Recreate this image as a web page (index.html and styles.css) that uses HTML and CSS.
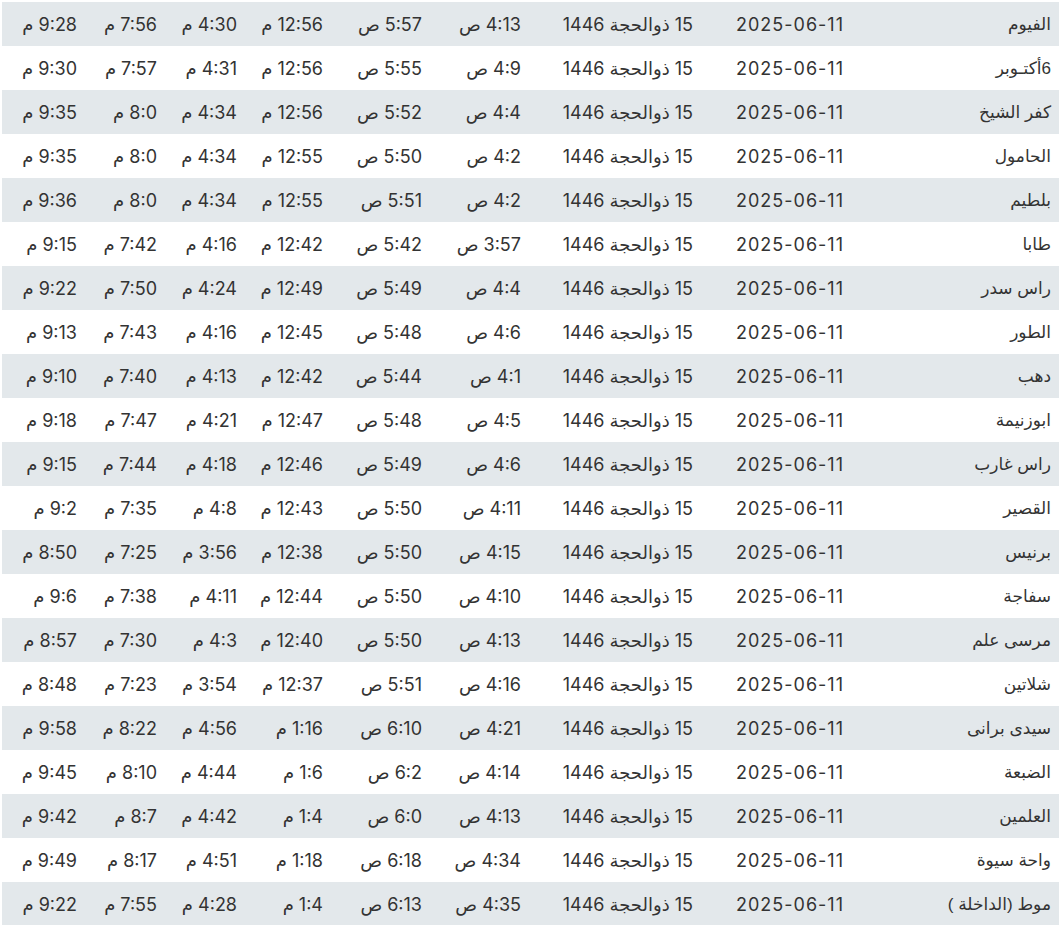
FILE: index.html
```html
<!DOCTYPE html>
<html lang="ar" dir="rtl">
  <head>
    <meta charset="UTF-8" />
    <title>مواقيت الصلاة</title>
    <link rel="stylesheet" href="styles.css">
  </head>
  <body>
    <div class="times-wrap">
      <table class="times-table">
        <colgroup>
          <col class="col-city" />
          <col class="col-date" />
          <col class="col-hijri" />
          <col class="col-fajr" />
          <col class="col-sunrise" />
          <col class="col-dhuhr" />
          <col class="col-asr" />
          <col class="col-maghrib" />
          <col class="col-isha" />
        </colgroup>
        <tbody id="times-body"></tbody>
      </table>
    </div>

    <script>
      // city, fajr, sunrise, dhuhr, asr, maghrib, isha
      const rows = [
        ["الفيوم", "4:13 ص", "5:57 ص", "12:56 م", "4:30 م", "7:56 م", "9:28 م"],
        ["6أكتـوبر", "4:9 ص", "5:55 ص", "12:56 م", "4:31 م", "7:57 م", "9:30 م"],
        ["كفر الشيخ", "4:4 ص", "5:52 ص", "12:56 م", "4:34 م", "8:0 م", "9:35 م"],
        ["الحامول", "4:2 ص", "5:50 ص", "12:55 م", "4:34 م", "8:0 م", "9:35 م"],
        ["بلطيم", "4:2 ص", "5:51 ص", "12:55 م", "4:34 م", "8:0 م", "9:36 م"],
        ["طابا", "3:57 ص", "5:42 ص", "12:42 م", "4:16 م", "7:42 م", "9:15 م"],
        ["راس سدر", "4:4 ص", "5:49 ص", "12:49 م", "4:24 م", "7:50 م", "9:22 م"],
        ["الطور", "4:6 ص", "5:48 ص", "12:45 م", "4:16 م", "7:43 م", "9:13 م"],
        ["دهب", "4:1 ص", "5:44 ص", "12:42 م", "4:13 م", "7:40 م", "9:10 م"],
        ["ابوزنيمة", "4:5 ص", "5:48 ص", "12:47 م", "4:21 م", "7:47 م", "9:18 م"],
        ["راس غارب", "4:6 ص", "5:49 ص", "12:46 م", "4:18 م", "7:44 م", "9:15 م"],
        ["القصير", "4:11 ص", "5:50 ص", "12:43 م", "4:8 م", "7:35 م", "9:2 م"],
        ["برنيس", "4:15 ص", "5:50 ص", "12:38 م", "3:56 م", "7:25 م", "8:50 م"],
        ["سفاجة", "4:10 ص", "5:50 ص", "12:44 م", "4:11 م", "7:38 م", "9:6 م"],
        ["مرسى علم", "4:13 ص", "5:50 ص", "12:40 م", "4:3 م", "7:30 م", "8:57 م"],
        ["شلاتين", "4:16 ص", "5:51 ص", "12:37 م", "3:54 م", "7:23 م", "8:48 م"],
        ["سيدى برانى", "4:21 ص", "6:10 ص", "1:16 م", "4:56 م", "8:22 م", "9:58 م"],
        ["الضبعة", "4:14 ص", "6:2 ص", "1:6 م", "4:44 م", "8:10 م", "9:45 م"],
        ["العلمين", "4:13 ص", "6:0 ص", "1:4 م", "4:42 م", "8:7 م", "9:42 م"],
        ["واحة سيوة", "4:34 ص", "6:18 ص", "1:18 م", "4:51 م", "8:17 م", "9:49 م"],
        ["موط (الداخلة )", "4:35 ص", "6:13 ص", "1:4 م", "4:28 م", "7:55 م", "9:22 م"],
      ];

      const tbody = document.getElementById("times-body");

      rows.forEach((r) => {
        const tr = document.createElement("tr");
        const cells = [r[0], "2025-06-11", "15 ذوالحجة 1446", ...r.slice(1)];
        cells.forEach((text, i) => {
          const td = document.createElement("td");
          if (i === 0) td.className = "city";
          if (i === 1) td.className = "date";
          td.textContent = text;
          tr.appendChild(td);
        });
        tbody.appendChild(tr);
      });
    </script>
  </body>
</html>
```

FILE: styles.css
```css
:root {
  --text-color: #333;
  --stripe-color: #e3e8eb;
}

* {
  margin: 0;
  padding: 0;
  box-sizing: border-box;
}

body {
  background: #fff;
  color: var(--text-color);
  font-family: "Inter", "DejaVu Sans", sans-serif;
}

.times-wrap {
  padding: 2px;
}

.times-table {
  width: 100%;
  border-collapse: collapse;
  table-layout: fixed;
}

.col-city { width: 208px; }
.col-date { width: 150px; }
.col-hijri { width: 172px; }
.col-fajr { width: 99px; }
.col-sunrise { width: 99px; }
.col-dhuhr { width: 86px; }
.col-asr { width: 80px; }
.col-maghrib { width: 80px; }
.col-isha { width: 83px; }

.times-table td {
  height: 44px;
  padding: 0 8px;
  text-align: right;
  font-size: 18px;
  white-space: nowrap;
  vertical-align: middle;
}

.times-table tr:nth-child(odd) {
  background: var(--stripe-color);
}

.times-table td.city {
  font-family: "Liberation Sans", "DejaVu Sans", sans-serif;
  font-size: 17px;
}

.times-table td.date {
  letter-spacing: 1px;
  padding-left: 7px;
  padding-right: 7px;
}
```
